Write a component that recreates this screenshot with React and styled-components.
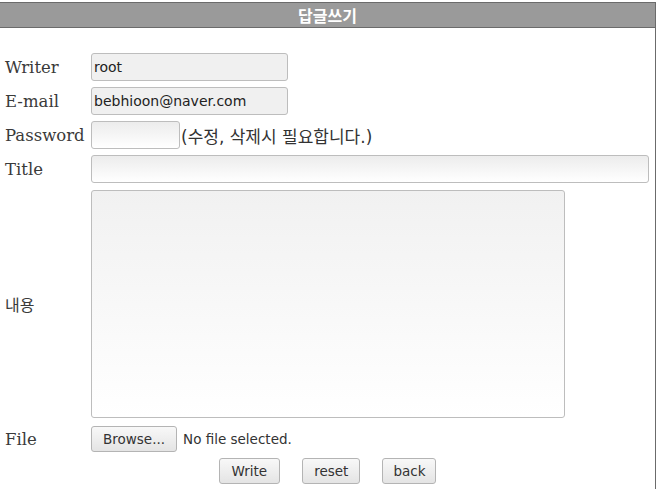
import React from "react";
import styled, { createGlobalStyle } from "styled-components";

const GlobalStyle = createGlobalStyle`
  body {
    margin: 0;
    background: #ffffff;
    font-family: "DejaVu Serif", "Noto Sans CJK KR", serif;
  }
`;

const Board = styled.div`
  margin-top: 2px;
  width: 656px;
  height: 487px;
  border-top: 1px solid #6b6b6b;
  border-right: 1px solid #6b6b6b;
  box-sizing: border-box;
  display: flex;
  flex-direction: column;
`;

const Header = styled.div`
  height: 24px;
  background-color: #9a9a9a;
  border-bottom: 1px solid #6b6b6b;
  color: #ffffff;
  font-family: "Noto Sans CJK KR", "DejaVu Sans", sans-serif;
  font-weight: bold;
  font-size: 16px;
  display: flex;
  align-items: center;
  justify-content: center;
`;

const Form = styled.form`
  display: flex;
  flex-direction: column;
  gap: 6px;
  padding-top: 25px;
`;

const Row = styled.div`
  display: flex;
  align-items: center;
  margin-top: ${(p) => p.$space || 0}px;
`;

const Label = styled.label`
  width: 91px;
  padding-left: 5px;
  box-sizing: border-box;
  font-size: ${(p) => (p.$kr ? 16 : 16.5)}px;
  color: #3a3a3a;
  white-space: nowrap;
  font-family: ${(p) =>
    p.$kr
      ? `"Noto Sans CJK KR", "DejaVu Sans", sans-serif`
      : `"DejaVu Serif", "Noto Sans CJK KR", serif`};
`;

const Field = styled.input`
  width: ${(p) => p.$w}px;
  height: 28px;
  box-sizing: border-box;
  border: 1px solid #bdbdbd;
  border-radius: 3px;
  padding: 0 2px;
  margin: 0;
  font-family: "DejaVu Sans", sans-serif;
  font-size: 14px;
  color: #222222;
  background: ${(p) =>
    p.readOnly ? "#f0f0f0" : "linear-gradient(#ececec, #ffffff)"};
  outline: none;
`;

const Note = styled.span`
  margin-left: 1px;
  font-family: "DejaVu Sans", "Noto Sans CJK KR", sans-serif;
  font-size: 17px;
  color: #333333;
`;

const Content = styled.textarea`
  width: 474px;
  height: 228px;
  box-sizing: border-box;
  border: 1px solid #bdbdbd;
  border-radius: 3px;
  margin: 0;
  resize: none;
  background: linear-gradient(#f1f1f1, #ffffff);
  outline: none;
`;

const Button = styled.button`
  height: 26px;
  box-sizing: border-box;
  padding: 0 ${(p) => p.$pad || 11}px;
  border: 1px solid #b4b4b4;
  border-radius: 3px;
  background: linear-gradient(#f8f8f8, #e4e4e4);
  font-family: "DejaVu Sans", sans-serif;
  font-size: 13.5px;
  color: #333333;
  margin: 0;
`;

const FileName = styled.span`
  margin-left: 6px;
  font-family: "DejaVu Sans", sans-serif;
  font-size: 13.5px;
  color: #333333;
`;

const Actions = styled.div`
  display: flex;
  justify-content: center;
  gap: 22px;
`;

export default function App() {
  return (
    <>
      <GlobalStyle />
      <Board>
        <Header>답글쓰기</Header>
        <Form onSubmit={(e) => e.preventDefault()}>
          <Row>
            <Label>Writer</Label>
            <Field $w={197} readOnly defaultValue="root" />
          </Row>
          <Row>
            <Label>E-mail</Label>
            <Field $w={197} readOnly defaultValue="bebhioon@naver.com" />
          </Row>
          <Row>
            <Label>Password</Label>
            <Field $w={89} type="password" />
            <Note>(수정, 삭제시 필요합니다.)</Note>
          </Row>
          <Row>
            <Label>Title</Label>
            <Field $w={558} />
          </Row>
          <Row $space={1}>
            <Label $kr>내용</Label>
            <Content />
          </Row>
          <Row $space={2}>
            <Label>File</Label>
            <Button type="button" $pad={11}>Browse...</Button>
            <FileName>No file selected.</FileName>
          </Row>
          <Actions>
            <Button type="submit" $pad={12}>Write</Button>
            <Button type="reset" $pad={11}>reset</Button>
            <Button type="button" $pad={10}>back</Button>
          </Actions>
        </Form>
      </Board>
    </>
  );
}
